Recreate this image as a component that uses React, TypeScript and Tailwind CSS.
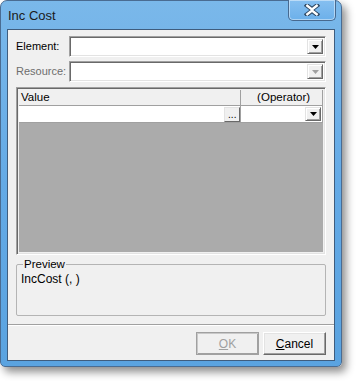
import React from "react";

const font = { fontFamily: '"Liberation Sans", Arial, sans-serif' };

function DropBtn({ disabled }: { disabled?: boolean }) {
  return (
    <div className="w-[16px] h-full bg-[#f0f0f0] border border-t-[#e3e3e3] border-l-[#e3e3e3] border-r-[#696969] border-b-[#696969] shadow-[inset_1px_1px_0_#ffffff,inset_-1px_-1px_0_#a0a0a0] flex items-center justify-center">
      <svg width="7" height="4" viewBox="0 0 7 4">
        <path d="M0 0h7L3.5 4z" fill={disabled ? "#a0a0a0" : "#000"} />
      </svg>
    </div>
  );
}

function Combo({ disabled }: { disabled?: boolean }) {
  return (
    <div className="w-[257px] h-[21px] bg-white border border-t-[#a0a0a0] border-l-[#a0a0a0] border-r-white border-b-white shadow-[inset_1px_1px_0_#696969,inset_-1px_-1px_0_#e3e3e3] flex justify-end p-[2px]">
      <DropBtn disabled={disabled} />
    </div>
  );
}

export default function App() {
  return (
    <div className="w-[356px] h-[381px] bg-white" style={font}>
      <div className="relative w-[342px] h-[367px] rounded-t-[7px] rounded-b-[5px] border border-[#4a6c92] bg-gradient-to-b from-[#7ab8ea] via-[#64aae6] to-[#5aa3e0] shadow-[4px_5px_9px_rgba(0,0,0,0.45)] flex flex-col px-[6px] pb-[5px]">
        {/* title bar */}
        <div className="h-[28px] flex items-center pl-[1px] pt-[2px] text-[13px] text-[#1b1b1b]">
          Inc Cost
        </div>
        {/* close button */}
        <div className="absolute right-[5px] top-[-1px] w-[48px] h-[21px] rounded-b-[5px] border border-[#47698f] border-t-0 bg-gradient-to-b from-[#86bff0] to-[#6cb0ea] shadow-[inset_0_0_0_1px_rgba(255,255,255,0.45)] flex items-center justify-center">
          <svg width="16" height="12" viewBox="0 0 16 12">
            <path d="M3 1.5L8 5.2L13 1.5M3 10.5L8 6.8L13 10.5" stroke="#2b4560" strokeWidth="4.4" fill="none" strokeLinecap="square" />
            <path d="M3.3 1.8L8 5.4L12.7 1.8M3.3 10.2L8 6.6L12.7 10.2" stroke="#ffffff" strokeWidth="2.4" fill="none" strokeLinecap="square" />
          </svg>
        </div>
        {/* client */}
        <div className="flex-1 border border-[#3f5d7e] bg-[#f0f0f0] flex flex-col pl-[8px] pr-[8px] text-[11.5px] text-black">
          <div className="mt-[6px] flex items-center h-[21px]">
            <span className="w-[53px] text-[11px]">Element:</span>
            <Combo />
          </div>
          <div className="mt-[4px] flex items-center h-[21px]">
            <span className="w-[53px] text-[11px] text-[#6d6d6d]">Resource:</span>
            <Combo disabled />
          </div>
          {/* grid */}
          <div className="mt-[5px] w-[310px] h-[168px] border border-t-[#a0a0a0] border-l-[#a0a0a0] border-r-white border-b-white shadow-[inset_1px_1px_0_#696969,inset_-1px_-1px_0_#e3e3e3] p-[2px] flex flex-col">
            <div className="flex flex-col flex-1 bg-[#ababab]">
              <div className="flex h-[16px] bg-[#f0f0f0] border-b border-[#a0a0a0]">
                <div className="w-[223px] border-r border-[#a0a0a0] pl-[2px] leading-[15px]">Value</div>
                <div className="w-[82px] border-r border-[#a0a0a0] text-center leading-[15px] pl-[4px]">(Operator)</div>
              </div>
              <div className="flex h-[17px] bg-white border-b border-[#a0a0a0]">
                <div className="w-[223px] border-r border-[#a0a0a0] flex justify-end py-[1px]">
                  <div className="w-[16px] h-[15px] bg-[#f0f0f0] border border-t-[#e3e3e3] border-l-[#e3e3e3] border-r-[#696969] border-b-[#696969] flex items-end justify-center text-[10px] leading-[10px] pb-[1px]">
                    ...
                  </div>
                </div>
                <div className="w-[82px] border-r border-[#a0a0a0] flex justify-end py-[1px] pr-[1px]">
                  <DropBtn />
                </div>
              </div>
            </div>
          </div>
          {/* preview group */}
          <div className="relative mt-[9px] w-[310px] h-[52px] border border-[#b4b4b4] rounded-[2px] pl-[4px] pt-[5px]">
            <span className="absolute left-[6px] top-[-8px] bg-[#f0f0f0] px-[1px] leading-[14px]">Preview</span>
            <div className="text-[12px]">IncCost (, )</div>
          </div>
          {/* separator */}
          <div className="mt-[8px] -mx-[8px] h-[2px] border-t border-[#a0a0a0] border-b border-b-white" />
          {/* buttons */}
          <div className="mt-[6px] flex justify-end gap-[4px]">
            <div className="w-[63px] h-[23px] bg-[#f0f0f0] border border-[#a0a0a0] shadow-[inset_1px_1px_0_#c8c8c8,inset_-1px_-1px_0_#a0a0a0] flex items-center justify-center text-[#a0a0a0] text-[12px]">
              <span><span className="underline">O</span>K</span>
            </div>
            <div className="w-[63px] h-[23px] bg-[#f0f0f0] border border-t-white border-l-white border-r-[#696969] border-b-[#696969] shadow-[inset_-1px_-1px_0_#a0a0a0,inset_1px_1px_0_#e3e3e3] flex items-center justify-center text-[12px]">
              <span><span className="underline">C</span>ancel</span>
            </div>
          </div>
        </div>
      </div>
    </div>
  );
}
